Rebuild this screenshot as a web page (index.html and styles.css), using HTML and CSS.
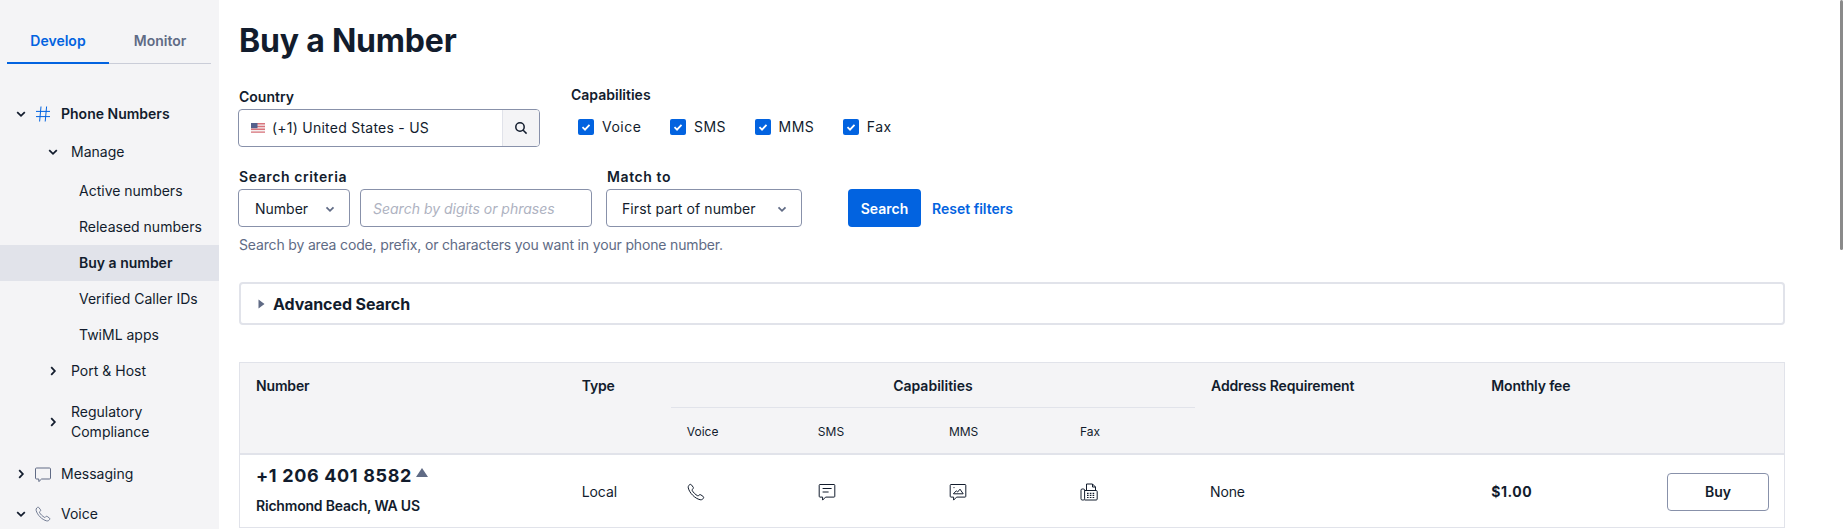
FILE: index.html
```html
<!DOCTYPE html>
<html lang="en">
<head>
  <meta charset="utf-8">
  <title>Buy a Number</title>
  <link rel="stylesheet" href="styles.css">
</head>
<body>
  <aside class="sidebar">
    <div class="tabs">
      <div class="tab tab-on">Develop</div>
      <div class="tab">Monitor</div>
    </div>
    <nav class="tree">
      <div class="row row-top">
        <svg class="chev" viewBox="0 0 10 10"><path d="M1.2 3.2 5 6.8 8.8 3.2"/></svg>
        <svg class="ico ico-hash" viewBox="0 0 16 16"><path d="M6 .5 4.6 15.5M11.6 .5l-1.4 15M1 5.4h14M1 10.6h14"/></svg>
        <b>Phone Numbers</b>
      </div>
      <div class="row row-sub row-manage">
        <svg class="chev" viewBox="0 0 10 10"><path d="M1.2 3.2 5 6.8 8.8 3.2"/></svg>
        <span>Manage</span>
      </div>
      <div class="leaf">Active numbers</div>
      <div class="leaf">Released numbers</div>
      <div class="leaf leaf-on">Buy a number</div>
      <div class="leaf">Verified Caller IDs</div>
      <div class="leaf">TwiML apps</div>
      <div class="row row-sub row-port">
        <svg class="chev" viewBox="0 0 10 10"><path d="M3.2 1.2 6.8 5 3.2 8.8"/></svg>
        <span>Port &amp; Host</span>
      </div>
      <div class="row row-sub row-reg">
        <svg class="chev" viewBox="0 0 10 10"><path d="M3.2 1.2 6.8 5 3.2 8.8"/></svg>
        <span>Regulatory<br>Compliance</span>
      </div>
      <div class="row row-top">
        <svg class="chev" viewBox="0 0 10 10"><path d="M3.2 1.2 6.8 5 3.2 8.8"/></svg>
        <svg class="ico" viewBox="0 0 16 16"><path d="M1.5 2h13a1 1 0 0 1 1 1v9a1 1 0 0 1-1 1H6.6l-2.8 2.6V13H1.5a1 1 0 0 1-1-1V3a1 1 0 0 1 1-1z"/></svg>
        <span>Messaging</span>
      </div>
      <div class="row row-top row-voice">
        <svg class="chev" viewBox="0 0 10 10"><path d="M1.2 3.2 5 6.8 8.8 3.2"/></svg>
        <svg class="ico" viewBox="0 0 18 18"><path d="M2 2.2C2.6 1.5 3.6 1.1 4.2 1.6L6.2 4.2C6.6 4.8 6.4 5.5 5.9 5.9L5.2 6.5C5 6.7 5 7 5.1 7.3 6.2 9.4 8.3 11.5 10.7 12.8 11 12.9 11.3 12.9 11.5 12.7L12.1 12C12.5 11.6 13.2 11.4 13.8 11.8L16.4 13.7C16.9 14.2 16.6 15.2 15.9 15.9 15.2 16.6 14.2 17 13 16.7 8 15.5 2.5 10 1.3 5 1 3.8 1.4 2.9 2 2.2Z"/></svg>
        <span>Voice</span>
      </div>
    </nav>
  </aside>

  <main class="main">
    <h1 class="title">Buy a Number</h1>

    <div class="filters">
      <div class="field field-country">
        <label class="label">Country</label>
        <div class="box country">
          <svg class="flag" viewBox="0 0 14 10">
            <rect width="14" height="10" fill="#f4f0f0"/>
            <path d="M0 .7h14M0 3.5h14M0 6.3h14M0 9.1h14" stroke="#d9747c" stroke-width="1.4"/>
            <rect width="6.5" height="5.2" fill="#55608c"/>
          </svg>
          <span class="country-text">(+1) United States - US</span>
          <span class="addon">
            <svg viewBox="0 0 14 14" width="14" height="14"><circle cx="6" cy="6" r="4.2"/><path d="M9.2 9.2 12.6 12.6"/></svg>
          </span>
        </div>
      </div>
      <div class="field">
        <label class="label">Capabilities</label>
        <div class="checks">
          <div class="check"><svg class="tick" viewBox="0 0 16 16"><path d="M4.5 8.2 7 10.6 11.5 5.8"/></svg>Voice</div>
          <div class="check"><svg class="tick" viewBox="0 0 16 16"><path d="M4.5 8.2 7 10.6 11.5 5.8"/></svg>SMS</div>
          <div class="check"><svg class="tick" viewBox="0 0 16 16"><path d="M4.5 8.2 7 10.6 11.5 5.8"/></svg>MMS</div>
          <div class="check"><svg class="tick" viewBox="0 0 16 16"><path d="M4.5 8.2 7 10.6 11.5 5.8"/></svg>Fax</div>
        </div>
      </div>
    </div>

    <div class="criteria">
      <div class="field">
        <label class="label label-wide">Search criteria</label>
        <div class="controls">
          <div class="box select select-type">Number<svg class="sel-chev" viewBox="0 0 10 10"><path d="M1.5 3.4 5 6.8 8.5 3.4"/></svg></div>
          <div class="box digits">Search by digits or phrases</div>
        </div>
      </div>
      <div class="field">
        <label class="label label-wide">Match to</label>
        <div class="box select select-match">First part of number<svg class="sel-chev" viewBox="0 0 10 10"><path d="M1.5 3.4 5 6.8 8.5 3.4"/></svg></div>
      </div>
      <button class="btn-search">Search</button>
      <a class="reset">Reset filters</a>
    </div>
    <p class="help">Search by area code, prefix, or characters you want in your phone number.</p>

    <div class="advanced">
      <svg class="adv-arrow" viewBox="0 0 7 10"><path d="M.5 .5 6.5 5 .5 9.5Z"/></svg>
      <b>Advanced Search</b>
    </div>

    <table class="numbers">
      <colgroup>
        <col class="c-num"><col class="c-type"><col class="c-cap"><col class="c-cap"><col class="c-cap"><col class="c-cap"><col class="c-addr"><col class="c-fee">
      </colgroup>
      <thead>
        <tr class="head-top">
          <th rowspan="2">Number</th>
          <th rowspan="2">Type</th>
          <th colspan="4" class="th-cap">Capabilities</th>
          <th rowspan="2">Address Requirement</th>
          <th rowspan="2">Monthly fee</th>
        </tr>
        <tr class="head-sub">
          <th>Voice</th><th>SMS</th><th>MMS</th><th>Fax</th>
        </tr>
      </thead>
      <tbody>
        <tr>
          <td class="td-number">
            <div class="phone">+1 206 401 8582<span class="up"></span></div>
            <div class="place">Richmond Beach, WA US</div>
          </td>
          <td>Local</td>
          <td><svg class="cap-ico" viewBox="0 0 18 18"><path d="M2 2.2C2.6 1.5 3.6 1.1 4.2 1.6L6.2 4.2C6.6 4.8 6.4 5.5 5.9 5.9L5.2 6.5C5 6.7 5 7 5.1 7.3 6.2 9.4 8.3 11.5 10.7 12.8 11 12.9 11.3 12.9 11.5 12.7L12.1 12C12.5 11.6 13.2 11.4 13.8 11.8L16.4 13.7C16.9 14.2 16.6 15.2 15.9 15.9 15.2 16.6 14.2 17 13 16.7 8 15.5 2.5 10 1.3 5 1 3.8 1.4 2.9 2 2.2Z"/></svg></td>
          <td><svg class="cap-ico" viewBox="0 0 18 18"><path d="M2 1.5h14a.8.8 0 0 1 .8.8v11a.8.8 0 0 1-.8.8H7.6l-3 3v-3H2a.8.8 0 0 1-.8-.8v-11a.8.8 0 0 1 .8-.8z"/><path d="M4.6 5.5h9M4.6 9h6"/></svg></td>
          <td><svg class="cap-ico" viewBox="0 0 18 18"><path d="M2 1.5h14a.8.8 0 0 1 .8.8v11a.8.8 0 0 1-.8.8H7.6l-3 3v-3H2a.8.8 0 0 1-.8-.8v-11a.8.8 0 0 1 .8-.8z"/><path d="M4.4 10.8h9.8L11 6.2 8.6 9 7.3 7.8 4.4 10.8M4.5 4.6h1"/></svg></td>
          <td><svg class="cap-ico" viewBox="0 0 18 18"><path d="M6.5 7V1h6l3 3v3"/><path d="M12.5 1v3h3"/><rect x="1" y="6" width="3.6" height="11" rx="1.2"/><path d="M4.6 7.5h11.6a1 1 0 0 1 1 1v7.5a1 1 0 0 1-1 1H4.6"/><path d="M7 10.3h1.6M9.8 10.3h1.6M12.6 10.3h1.6M7 12.4h1.6M9.8 12.4h1.6M12.6 12.4h1.6M7 14.5h1.6M9.8 14.5h1.6M12.6 14.5h1.6" stroke-width="1.2"/></svg></td>
          <td class="td-none">None</td>
          <td><div class="fee-wrap"><b class="fee">$1.00</b><button class="btn-buy">Buy</button></div></td>
        </tr>
      </tbody>
    </table>
  </main>

  <div class="thumb"></div>
</body>
</html>
```

FILE: styles.css
```css
* { box-sizing: border-box; }

html, body { height: 529px; overflow: hidden; }

body {
  margin: 0;
  display: flex;
  font-family: Inter, "Liberation Sans", sans-serif;
  font-size: 14px;
  line-height: 20px;
  color: #121c2d;
  background: #fff;
}

b { font-weight: 600; }

/* sidebar */
.sidebar {
  width: 219px;
  height: 529px;
  flex: none;
  background: #f4f4f6;
  overflow: hidden;
}

.tabs {
  display: flex;
  margin: 0 8px 0 7px;
  padding-top: 20px;
  height: 64px;
  border-bottom: 1px solid #cacdd8;
}

.tab {
  width: 102px;
  height: 44px;
  padding-top: 11px;
  text-align: center;
  font-weight: 600;
  color: #606b85;
}

.tab-on {
  color: #0263e0;
  border-bottom: 2px solid #0263e0;
}

.tree { padding-top: 31px; }

.row {
  display: flex;
  align-items: center;
  height: 38px;
}

.row-top { padding-left: 16px; }
.row-sub { padding-left: 48px; }
.row-manage { margin-bottom: 2px; }
.row-port { height: 36px; }
.row-reg { height: 66px; }
.row-voice { margin-top: 2px; }

.chev {
  width: 10px;
  height: 10px;
  flex: none;
  fill: none;
  stroke: #121c2d;
  stroke-width: 1.8;
}

.row-sub .chev { margin-right: 13px; }

.ico {
  width: 16px;
  height: 16px;
  flex: none;
  margin: 0 10px 0 9px;
  fill: none;
  stroke: #606b85;
  stroke-width: 1;
}

.ico-hash { stroke: #0263e0; }

.leaf {
  height: 36px;
  padding: 8px 0 0 79px;
}

.leaf-on {
  background: #e1e3ea;
  font-weight: 600;
}

/* main column */
.main {
  flex: 1;
  padding: 21px 59px 0 20px;
  min-width: 0;
}

.title {
  margin: 0;
  font-size: 32px;
  line-height: 40px;
  font-weight: 700;
  letter-spacing: -.2px;
}

.filters {
  display: flex;
  gap: 31px;
  margin-top: 24px;
}

.field-country { width: 301px; padding-top: 2px; }

.label {
  display: block;
  font-weight: 600;
  margin-bottom: 2px;
}

.label-wide { letter-spacing: .6px; }

.box {
  display: flex;
  align-items: center;
  height: 38px;
  background: #fff;
  border: 1px solid #8891aa;
  border-radius: 4px;
}

.country {
  width: 302px;
  margin-left: -1px;
  padding-left: 12px;
  overflow: hidden;
}

.flag { width: 14px; height: 10px; flex: none; margin-right: 7px; }
.country-text { flex: 1; letter-spacing: .24px; }

.addon {
  width: 37px;
  height: 36px;
  display: flex;
  align-items: center;
  justify-content: center;
  background: #f4f4f6;
  border-left: 1px solid #e1e3ea;
}

.addon svg { fill: none; stroke: #121c2d; stroke-width: 1.5; }

.checks {
  display: flex;
  gap: 28.5px;
  padding: 10px 0 0 7px;
}

.check {
  display: flex;
  align-items: center;
  gap: 8px;
  letter-spacing: .5px;
}

.tick {
  width: 16px;
  height: 16px;
  background: #0263e0;
  border-radius: 2px;
  fill: none;
  stroke: #fff;
  stroke-width: 1.8;
}

.criteria {
  display: flex;
  align-items: flex-end;
  margin-top: 20px;
}

.controls { display: flex; gap: 10px; margin-right: 15px; margin-left: -1px; }

.select {
  justify-content: space-between;
  padding: 1px 14px 0 16px;
}

.select-type { width: 112px; }

.select-match {
  width: 196px;
  margin-left: -1px;
  padding-left: 15px;
  letter-spacing: .1px;
}

.sel-chev {
  width: 10px;
  height: 10px;
  fill: none;
  stroke: #606b85;
  stroke-width: 1.8;
}

.digits {
  width: 232px;
  padding: 1px 0 0 12px;
  font-style: italic;
  color: #aeb2c1;
}

.btn-search {
  width: 73px;
  height: 38px;
  margin-left: 46px;
  padding: 1px 0 0;
  background: #0263e0;
  border: 0;
  border-radius: 4px;
  color: #fff;
  font: 600 14px/20px Inter, sans-serif;
}

.reset {
  margin: 0 0 8px 11px;
  color: #0263e0;
  font-weight: 600;
}

.help {
  margin: 8px 0 0;
  color: #606b85;
  letter-spacing: -.16px;
}

.advanced {
  display: flex;
  align-items: center;
  height: 43px;
  margin-top: 27px;
  padding-left: 17px;
  border: 2px solid #e1e3ea;
  border-radius: 4px;
  font-size: 16px;
}

.advanced b { font-weight: 700; letter-spacing: -.08px; }

.adv-arrow {
  width: 7px;
  height: 10px;
  margin-right: 8px;
  fill: #606b85;
}

/* table */
.numbers {
  width: 1546px;
  margin-top: 37px;
  border-collapse: collapse;
  table-layout: fixed;
  border: 1px solid #e1e3ea;
}

.c-num { width: 326px; }
.c-type { width: 105px; }
.c-cap { width: 131px; }
.c-addr { width: 280px; }
.c-fee { width: 309px; }

.numbers thead {
  background: #f4f4f6;
  border-bottom: 2px solid #e1e3ea;
}

.numbers th {
  padding: 0 16px;
  text-align: left;
  font-weight: 600;
  letter-spacing: -.15px;
  vertical-align: top;
}

.head-top th { padding-top: 13px; height: 45px; }

.head-top .th-cap {
  text-align: center;
  border-bottom: 1px solid #e1e3ea;
  letter-spacing: 0;
}

.numbers .head-sub th {
  height: 46px;
  padding-top: 4px;
  font-size: 12px;
  font-weight: 400;
  letter-spacing: 0;
  vertical-align: middle;
}

.numbers td {
  height: 74px;
  padding: 3px 16px 0;
  vertical-align: middle;
  letter-spacing: -.08px;
}

.numbers .td-number {
  padding-top: 7px;
  vertical-align: top;
}

.numbers .td-none { padding-left: 15px; letter-spacing: -.2px; }

.phone {
  font-size: 18px;
  font-weight: 700;
  letter-spacing: .65px;
  line-height: 28px;
}

.up {
  display: inline-block;
  margin-left: 4px;
  vertical-align: 5px;
  border: 6.5px solid transparent;
  border-top: 0;
  border-bottom: 9px solid #606b85;
}

.place {
  font-weight: 600;
  margin-top: 6px;
  letter-spacing: -.2px;
}

.cap-ico {
  display: block;
  width: 18px;
  height: 18px;
  fill: none;
  stroke: #121c2d;
  stroke-width: 1;
}

.fee-wrap {
  display: flex;
  align-items: center;
  justify-content: space-between;
  padding-right: 0;
}

.fee { letter-spacing: .5px; font-weight: 700; }

.btn-buy {
  width: 102px;
  height: 38px;
  margin-right: -1px;
  background: #fff;
  border: 1px solid #8891aa;
  border-radius: 4px;
  color: #121c2d;
  font: 600 14px/20px Inter, sans-serif;
}

/* scrollbar thumb sits over the page edge */
.thumb {
  position: absolute;
  top: 0;
  right: 1px;
  width: 3px;
  height: 250px;
  background: #8a8a8a;
  border-radius: 2px;
}
```
